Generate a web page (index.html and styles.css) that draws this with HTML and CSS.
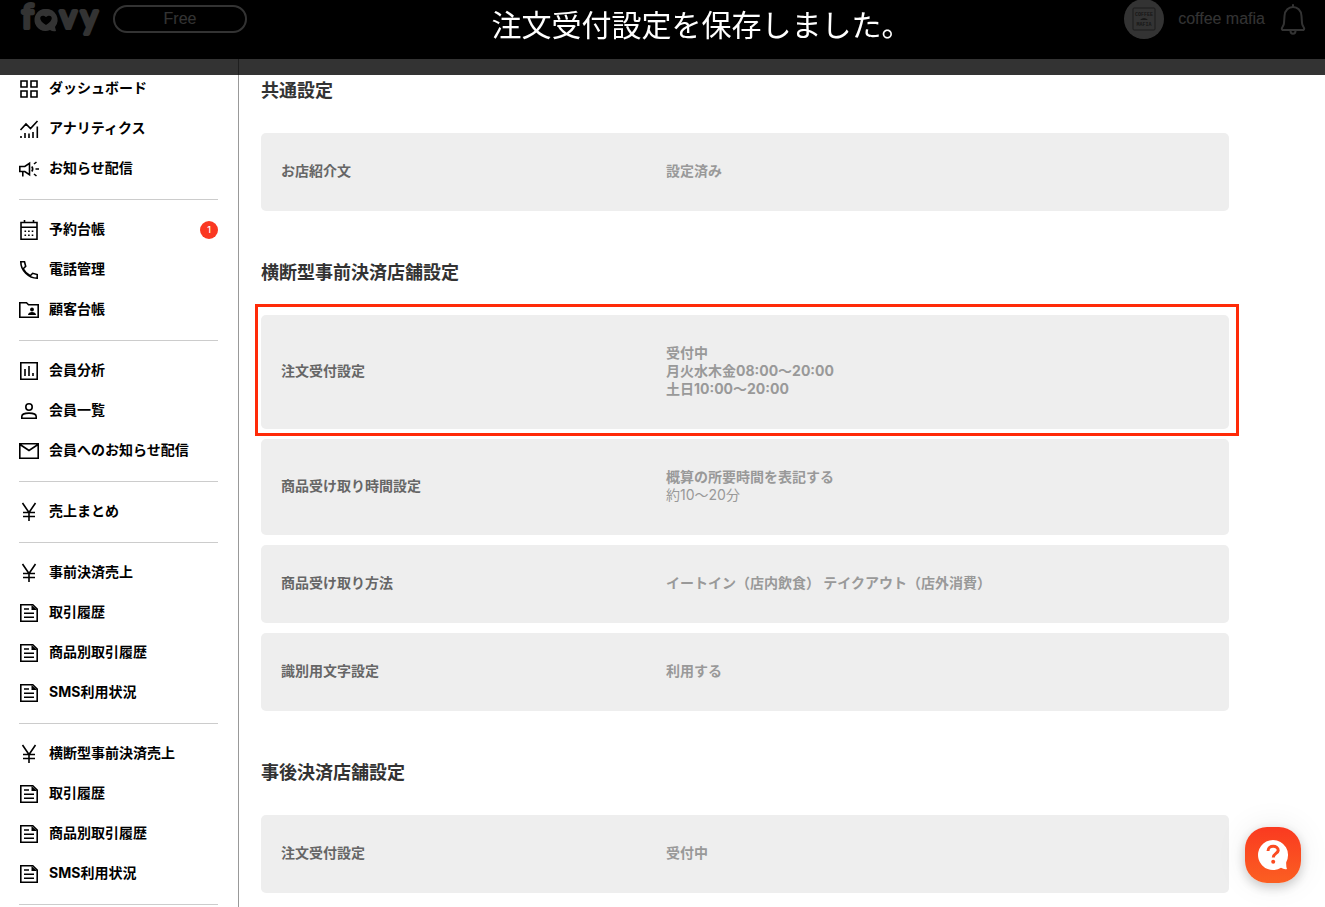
FILE: index.html
```html
<!DOCTYPE html>
<html lang="ja">
<head>
<meta charset="utf-8">
<meta name="viewport" content="width=device-width, initial-scale=1">
<title>favy 注文受付設定</title>
<link rel="stylesheet" href="styles.css">
</head>
<body>
<svg class="sprite" aria-hidden="true">
  <symbol id="i-grid" viewBox="2 2 20 20"><path d="M4 4h6v6H4zM14 4h6v6h-6zM4 14h6v6H4zM14 14h6v6h-6z"/></symbol>
  <symbol id="i-chart" viewBox="2 2 20 20"><path d="M3.500 13l5.500-6 4.500 4.500L20.500 4M4 21v-2M8 21v-5M12 21v-4.500M16 21v-6M20.300 21V9.500"/></symbol>
  <symbol id="i-horn" viewBox="2 2 20 20"><path d="M2.800 9.500h5l4.700-3.200v11.400l-4.700-3.200h-5zM5.800 14.500v5M14.800 9.500q1.800 2.500 0 5M17 7l2.500-2M18.500 12h3.500M17 17l2.500 2"/></symbol>
  <symbol id="i-calendar" viewBox="2 2 20 20"><path d="M4 4.500h16v16.700H4zM4 9.200h16M7.500 2v2.500M16.500 2v2.500"/><path d="M7.500 13.200h1.600m2 0h1.600m2 0h1.600M7.500 17.200h1.600m2 0h1.600m2 0h1.600"/></symbol>
  <symbol id="i-phone" viewBox="2 2 20 20"><path d="M3.800 3.800h3.700l1.200 4.500-2.500 2.500c1.600 3 4 5.400 7 7l2.500-2.500 4.500 1.200v3.700C11.500 20.200 3.800 12.500 3.800 3.800z"/></symbol>
  <symbol id="i-folder" viewBox="2 2 20 20"><path d="M2.800 4.800h6.700l2 2h9.700v12.500H2.800z"/><path class="solid" d="M11 17c0-2 2-3 4-3s4 1 4 3z"/><circle class="solid" cx="15" cy="11.500" r="1.900"/></symbol>
  <symbol id="i-bars" viewBox="2 2 20 20"><path d="M3.800 3.800h16.400v16.400H3.800zM8 10v7M12 7v10M16 14v3"/></symbol>
  <symbol id="i-person" viewBox="2 2 20 20"><circle cx="12" cy="8" r="3.200"/><path d="M4.800 19.200v-1.700c0-4.500 14.400-4.500 14.400 0v1.700z"/></symbol>
  <symbol id="i-mail" viewBox="2 2 20 20"><path d="M2.800 4.800h18.400v14.400H2.800zM3 5.500l9 6 9-6"/></symbol>
  <symbol id="i-yen" viewBox="2 2 20 20"><path d="M5.500 3l6.500 9.500L18.500 3M12 12.500V21M6 12.500h12M6 16.500h12"/></symbol>
  <symbol id="i-doc" viewBox="2 2 20 20"><path d="M3.800 3.800h12l4.400 4.400v12H3.800zM7 8h5M7 12.200h10M7 16.300h10"/><path class="solid" d="M14.500 4v5H20z"/></symbol>
</svg>

<div class="app">
  <header class="header">
    <a class="logo" href="#" aria-label="favy">
      <svg width="84" height="38" viewBox="0 0 84 38">
        <text class="logo-text" x="4 20 42 63" y="28">favy</text>
        <path class="logo-bubble" d="M28 9a11 11 0 1 0 4 21q3 2 6 1l-1-4a11 11 0 0 0-9-18z"/>
        <path class="logo-heart" d="M28 25c-10-6-5-12 0-8 5-4 10 2 0 8z"/>
      </svg>
    </a>
    <button class="plan" type="button">Free</button>
    <div class="account">
      <svg class="avatar" width="40" height="40" viewBox="0 0 40 40">
        <circle class="avatar-bg" cx="20" cy="20" r="20"/>
        <rect class="avatar-frame" x="9" y="9" width="22" height="22" rx="1"/>
        <text class="avatar-text" x="20" y="17">COFFEE</text>
        <path class="avatar-mark" d="M16 21q4-4 8 0z"/>
        <text class="avatar-text" x="20" y="27">MAFIA</text>
      </svg>
      <span>coffee mafia</span>
    </div>
    <button class="bell" type="button" aria-label="通知">
      <svg width="26" height="32" viewBox="0 0 26 32"><path d="M13 2v2M2.500 27c-2.500-2 1.500-3 1.500-7l.5-7C5 1 21 1 21.500 13l.5 7c0 4 4 5 1.500 7zM10.500 28c0 3.500 5 3.500 5 0"/></svg>
    </button>
  </header>

  <div class="body">
    <nav class="sidebar" aria-label="メニュー">
      <ul>
        <li><a href="#"><svg><use href="#i-grid"/></svg><span>ダッシュボード</span></a></li>
        <li><a href="#"><svg><use href="#i-chart"/></svg><span>アナリティクス</span></a></li>
        <li><a href="#"><svg><use href="#i-horn"/></svg><span>お知らせ配信</span></a></li>
      </ul>
      <ul>
        <li><a href="#"><svg><use href="#i-calendar"/></svg><span>予約台帳</span><b class="badge">1</b></a></li>
        <li><a href="#"><svg><use href="#i-phone"/></svg><span>電話管理</span></a></li>
        <li><a href="#"><svg><use href="#i-folder"/></svg><span>顧客台帳</span></a></li>
      </ul>
      <ul>
        <li><a href="#"><svg><use href="#i-bars"/></svg><span>会員分析</span></a></li>
        <li><a href="#"><svg><use href="#i-person"/></svg><span>会員一覧</span></a></li>
        <li><a href="#"><svg><use href="#i-mail"/></svg><span>会員へのお知らせ配信</span></a></li>
      </ul>
      <ul>
        <li><a href="#"><svg><use href="#i-yen"/></svg><span>売上まとめ</span></a></li>
      </ul>
      <ul>
        <li><a href="#"><svg><use href="#i-yen"/></svg><span>事前決済売上</span></a></li>
        <li><a href="#"><svg><use href="#i-doc"/></svg><span>取引履歴</span></a></li>
        <li><a href="#"><svg><use href="#i-doc"/></svg><span>商品別取引履歴</span></a></li>
        <li><a href="#"><svg><use href="#i-doc"/></svg><span>SMS利用状況</span></a></li>
      </ul>
      <ul>
        <li><a href="#"><svg><use href="#i-yen"/></svg><span>横断型事前決済売上</span></a></li>
        <li><a href="#"><svg><use href="#i-doc"/></svg><span>取引履歴</span></a></li>
        <li><a href="#"><svg><use href="#i-doc"/></svg><span>商品別取引履歴</span></a></li>
        <li><a href="#"><svg><use href="#i-doc"/></svg><span>SMS利用状況</span></a></li>
      </ul>
    </nav>

    <main class="main">
      <section>
        <h2>共通設定</h2>
        <div class="cards">
          <a class="card" href="#"><span class="label">お店紹介文</span><span class="value">設定済み</span></a>
        </div>
      </section>
      <section>
        <h2>横断型事前決済店舗設定</h2>
        <div class="cards">
          <a class="card marked" href="#"><span class="label">注文受付設定</span><span class="value">受付中<br>月火水木金08:00〜20:00<br>土日10:00〜20:00</span></a>
          <a class="card" href="#"><span class="label">商品受け取り時間設定</span><span class="value">概算の所要時間を表記する<br><span class="note">約10〜20分</span></span></a>
          <a class="card" href="#"><span class="label">商品受け取り方法</span><span class="value">イートイン（店内飲食） テイクアウト（店外消費）</span></a>
          <a class="card" href="#"><span class="label">識別用文字設定</span><span class="value">利用する</span></a>
        </div>
      </section>
      <section>
        <h2>事後決済店舗設定</h2>
        <div class="cards">
          <a class="card" href="#"><span class="label">注文受付設定</span><span class="value">受付中</span></a>
        </div>
      </section>
    </main>
  </div>
</div>

<div class="toast" role="status">注文受付設定を保存しました。</div>

<button class="help" type="button" aria-label="ヘルプ">
  <svg width="32" height="32" viewBox="0 0 32 32">
    <path class="bubble" d="M16 1a15 15 0 1 0 8 27.700q3 2 6 1.300-1-2-.8-6.800A15 15 0 0 0 16 1z"/>
    <path class="question" d="M11 12c0-6.500 10.500-6 10.200-.5-.3 3-4.900 3-4.900 7"/>
    <circle class="question-dot" cx="16.200" cy="22.700" r="2"/>
  </svg>
</button>
</body>
</html>
```

FILE: styles.css
```css
* {
  box-sizing: border-box;
}

body {
  margin: 0;
  background: #fff;
  color: #333;
  font-family: Inter, "Noto Sans CJK JP", sans-serif;
  font-size: 14px;
  line-height: 18px;
}

a {
  color: inherit;
  text-decoration: none;
}

button {
  padding: 0;
  border: 0;
  background: none;
  font: inherit;
  cursor: pointer;
}

.sprite {
  position: absolute;
  width: 0;
  height: 0;
}

.app {
  display: flex;
  flex-direction: column;
  height: 100vh;
  overflow: hidden;
}

/* Header */
.header {
  display: flex;
  flex: none;
  align-items: center;
  height: 59px;
  padding: 0 19px 21px 18px;
  background: #000;
  color: #fff;
  font-family: "Liberation Sans", "Noto Sans CJK JP", sans-serif;
  font-size: 16px;
}

.logo,
.logo svg,
.avatar,
.bell svg {
  display: block;
}

.logo {
  margin-right: 11px;
}

.logo-text {
  fill: #fff;
  stroke: #fff;
  stroke-width: 4;
  stroke-linecap: round;
  stroke-linejoin: round;
  font-family: Lato, sans-serif;
  font-size: 32px;
  font-weight: 400;
}

.logo-bubble {
  fill: #fff;
}

.logo-heart {
  fill: #000;
}

.plan {
  width: 134px;
  height: 28px;
  border: 2px solid #fff;
  border-radius: 14px;
  color: #fff;
}

.account {
  display: flex;
  align-items: center;
  gap: 14px;
  margin-left: auto;
}

.avatar-bg {
  fill: #fff;
}

.avatar-frame {
  fill: none;
  stroke: #888;
}

.avatar-text {
  fill: #777;
  font-family: "Liberation Mono", monospace;
  font-size: 5px;
  font-weight: 700;
  text-anchor: middle;
}

.avatar-mark {
  fill: #777;
}

.bell {
  margin-left: 15px;
}

.bell path {
  fill: none;
  stroke: #fff;
  stroke-width: 2;
  stroke-linecap: round;
}

.body {
  display: flex;
  flex: 1;
  min-height: 0;
}

/* Sidebar */
.sidebar {
  flex: none;
  width: 239px;
  padding: 0 20px 0 19px;
  border-right: 1px solid #999;
  overflow: hidden;
  color: #000;
  font-weight: 700;
}

.sidebar ul {
  margin: 0;
  padding: 10px 0;
  border-bottom: 1px solid #ccc;
  list-style: none;
}

.sidebar a {
  display: flex;
  align-items: center;
  gap: 10px;
  height: 40px;
}

.sidebar span {
  padding-bottom: 3px;
}

.sidebar svg {
  flex: none;
  width: 20px;
  height: 20px;
  fill: none;
  stroke: #000;
  stroke-width: 1.6;
}

.solid {
  fill: #000;
  stroke: none;
}

.badge {
  width: 18px;
  height: 18px;
  margin-left: auto;
  border-radius: 50%;
  background: #fa3822;
  color: #fff;
  font-size: 9px;
  font-weight: 500;
  text-align: center;
}

/* Settings */
.main {
  flex: 1;
  min-width: 0;
  padding: 20px 96px 0 22px;
  overflow: hidden;
}

.main section {
  margin-bottom: 50px;
}

.main h2 {
  margin: 0 0 30px;
  font-size: 18px;
  line-height: 24px;
}

.cards {
  display: grid;
  gap: 10px;
}

.card {
  position: relative;
  display: grid;
  grid-template-columns: 385px 1fr;
  align-items: center;
  padding: 29px 20px 31px;
  border-radius: 5px;
  background: #eee;
  font-weight: 700;
}

.label {
  color: #666;
}

.value {
  color: #999;
}

.note {
  font-weight: 400;
}

.marked::after {
  content: "";
  position: absolute;
  z-index: 1;
  inset: -11px -10px -7px -6px;
  border: 3px solid #ff2a08;
}

/* Saved message */
.toast {
  position: fixed;
  inset: 0 0 auto;
  padding: 7px 0 32px 78px;
  background: rgba(0, 0, 0, 0.8);
  color: #fff;
  font-size: 30px;
  line-height: 36px;
  text-align: center;
}

/* Help button */
.help {
  position: fixed;
  right: 24px;
  bottom: 24px;
  display: grid;
  place-items: center;
  width: 56px;
  height: 56px;
  border-radius: 22px;
  background: linear-gradient(#fa3a20, #fb5f22);
  box-shadow: 0 4px 12px rgba(0, 0, 0, 0.2), 0 0 32px rgba(0, 0, 0, 0.08);
}

.bubble {
  fill: #fff;
}

.question {
  fill: none;
  stroke: #fb4b21;
  stroke-width: 3;
}

.question-dot {
  fill: #fb4b21;
}
```
